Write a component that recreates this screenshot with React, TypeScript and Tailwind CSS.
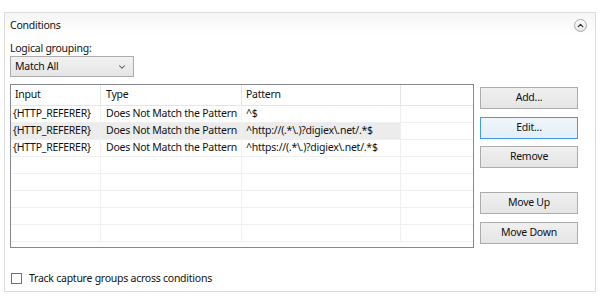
import { ChevronDown, ChevronUp } from 'lucide-react';

const rows = [
  { input: '{HTTP_REFERER}', type: 'Does Not Match the Pattern', pattern: '^$' },
  { input: '{HTTP_REFERER}', type: 'Does Not Match the Pattern', pattern: '^http://(.*\\.)?digiex\\.net/.*$', selected: true },
  { input: '{HTTP_REFERER}', type: 'Does Not Match the Pattern', pattern: '^https://(.*\\.)?digiex\\.net/.*$' },
  {}, {}, {}, {}, {},
];

const buttons = [
  { label: 'Add...', focus: false, mt: 'mt-[3px]' },
  { label: 'Edit...', focus: true, mt: 'mt-[8px]' },
  { label: 'Remove', focus: false, mt: 'mt-[7px]' },
  { label: 'Move Up', focus: false, mt: 'mt-[24px]' },
  { label: 'Move Down', focus: false, mt: 'mt-[8px]' },
];

export default function App() {
  return (
    <div
      className="w-[602px] h-[300px] bg-white pt-[12px] pl-[4px] text-[10.5px] tracking-[-0.25px] text-[#111]"
      style={{ fontFamily: '"Noto Sans", "Open Sans", sans-serif' }}
    >
      <div className="w-[592px] h-[280px] border border-[#dcdcdc] flex flex-col">
        {/* header */}
        <div className="h-[22px] flex items-center justify-between pl-[5px] pr-[8px] bg-gradient-to-b from-[#f5f5f5] to-white">
          <span className="mt-[3px]">Conditions</span>
          <span className="w-[13px] h-[13px] mt-[2px] rounded-full border border-[#a8a8a8] bg-gradient-to-b from-white to-[#e6e6e6] flex items-center justify-center">
            <ChevronUp className="w-[9px] h-[9px] text-[#333]" strokeWidth={3.5} />
          </span>
        </div>
        <div className="pl-[5px] pt-[5px] leading-[16px]">Logical grouping:</div>
        <div className="pl-[5px]">
          <div className="w-[124px] h-[21px] border border-[#acacac] bg-gradient-to-b from-[#f2f2f2] to-[#e5e5e5] flex items-center justify-between pl-[4px] pr-[6px]">
            <span>Match All</span>
            <ChevronDown className="w-[10px] h-[10px] text-[#555]" strokeWidth={2.5} />
          </div>
        </div>
        <div className="flex pl-[5px] mt-[7px]">
          {/* list view */}
          <div className="w-[464px] h-[164px] border border-[#828790] overflow-hidden">
            <div className="flex h-[21px] items-center border-b border-[#e5e5e5]">
              <div className="w-[90px] pl-[4px] border-r border-[#e5e5e5] h-full flex items-center">Input</div>
              <div className="w-[141px] pl-[5px] border-r border-[#e5e5e5] h-full flex items-center">Type</div>
              <div className="w-[159px] pl-[4px] border-r border-[#e5e5e5] h-full flex items-center">Pattern</div>
              <div className="flex-1" />
            </div>
            {rows.map((r, i) => (
              <div key={i} className="flex h-[17px] border-b border-[#f0f0f0] items-center">
                <div className={`w-[90px] h-full pl-[2px] border-r border-[#f0f0f0] flex items-center whitespace-nowrap ${r.selected ? 'bg-[#ececec]' : ''}`}>
                  {r.input}
                </div>
                <div className={`w-[141px] h-full pl-[5px] border-r border-[#f0f0f0] flex items-center whitespace-nowrap ${r.selected ? 'bg-[#ececec]' : ''}`}>
                  {r.type}
                </div>
                <div className={`w-[159px] h-full pl-[4px] border-r border-[#f0f0f0] flex items-center whitespace-nowrap ${r.selected ? 'bg-[#ececec]' : ''}`}>
                  {r.pattern}
                </div>
                <div className="flex-1" />
              </div>
            ))}
          </div>
          {/* buttons */}
          <div className="ml-[6px] flex flex-col">
            {buttons.map((b) => (
              <button
                key={b.label}
                className={`w-[98px] h-[22px] border ${b.mt} ${
                  b.focus
                    ? 'border-[#3c9ee6] bg-gradient-to-b from-[#f0f6fb] to-[#e3eef8]'
                    : 'border-[#acacac] bg-gradient-to-b from-[#f0f0f0] to-[#e5e5e5]'
                } flex items-center justify-center`}
              >
                {b.label}
              </button>
            ))}
          </div>
        </div>
        <div className="flex items-center pl-[6px] mt-[23px]">
          <span className="w-[11px] h-[11px] border border-[#707070] bg-white" />
          <span className="ml-[7px]">Track capture groups across conditions</span>
        </div>
      </div>
    </div>
  );
}
